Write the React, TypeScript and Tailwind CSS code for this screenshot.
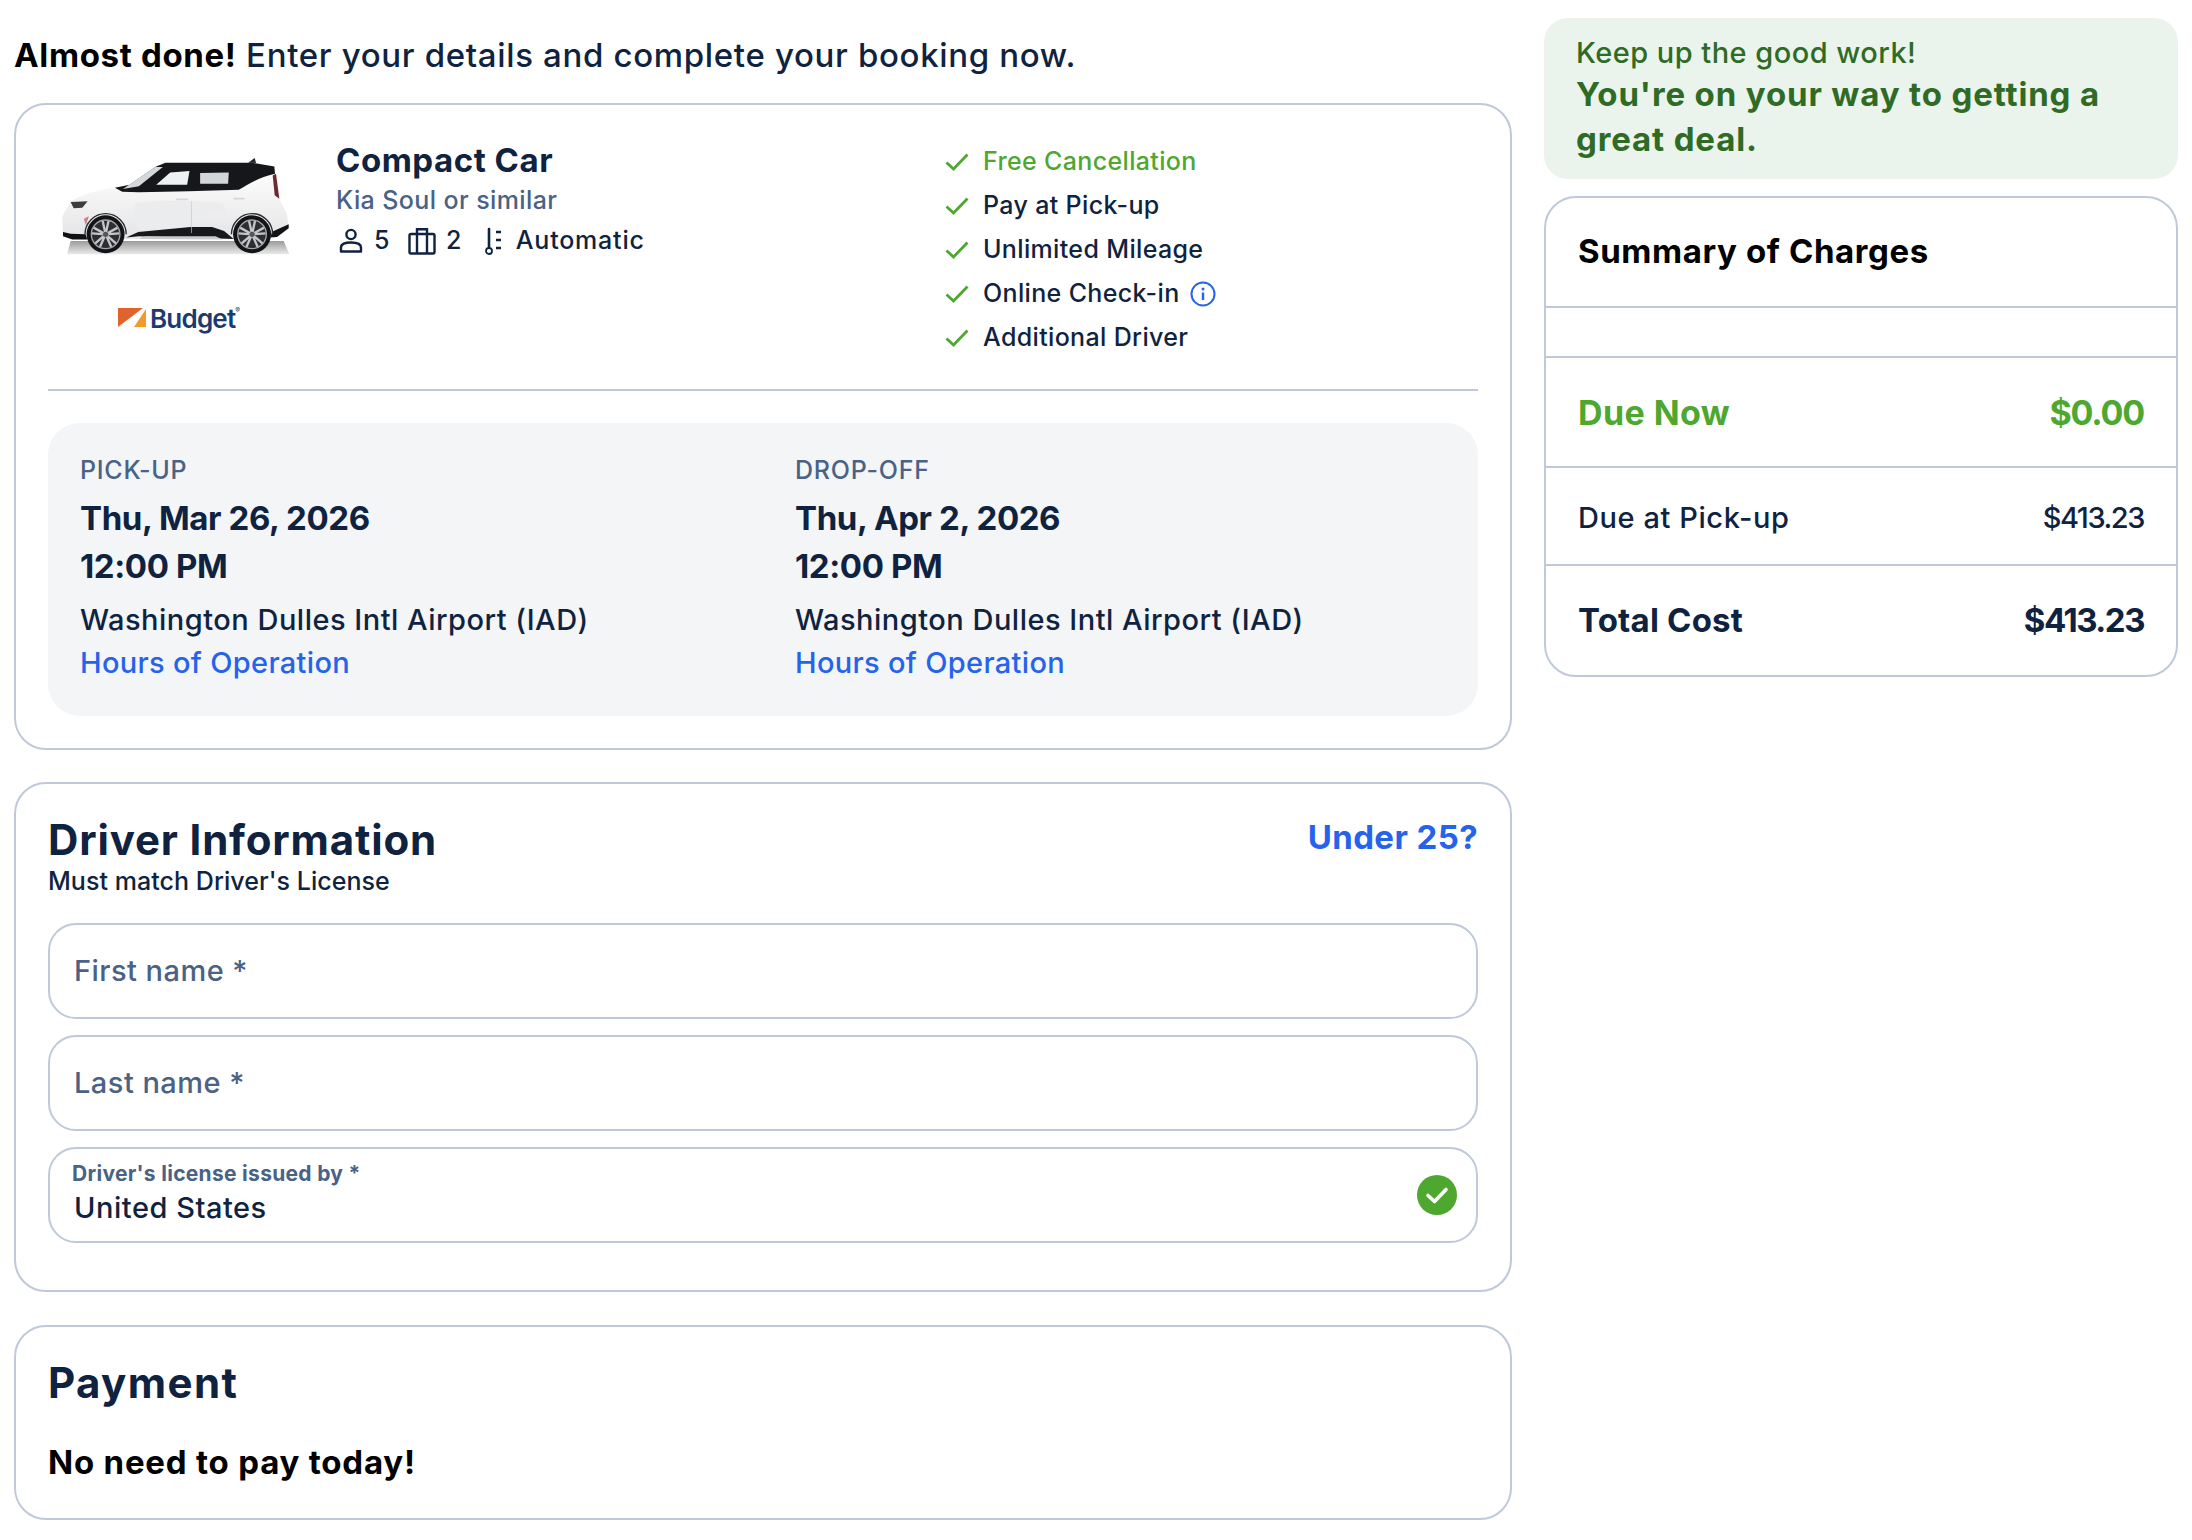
import React from "react";

function Car() {
  return (
    <svg viewBox="60 80 700 300" className="w-[233px] h-[100px] shrink-0" aria-hidden="true">
      <defs>
        <linearGradient id="shadow" x1="0" y1="0" x2="0" y2="1">
          <stop offset="0" stopColor="#6f6f6f" />
          <stop offset="1" stopColor="#e2e2e2" />
        </linearGradient>
        <linearGradient id="body" x1="0" y1="0" x2="0" y2="1">
          <stop offset="0" stopColor="#ffffff" />
          <stop offset="1" stopColor="#e4e4e6" />
        </linearGradient>
      </defs>
      <path d="M95 332 L735 332 L752 372 L84 372 Z" fill="url(#shadow)" opacity="0.7" />
      <path d="M72 312 L70 258 L95 213 C130 190 190 176 240 170 L640 110 L708 125 L716 195 L745 250 L750 292 L715 320 L130 328 Z" fill="url(#body)" />
      <path d="M290 218 C350 210 480 210 552 218 L566 250 C540 246 500 250 470 270 L460 290 L300 300 L282 262 Z" fill="#ebecee" />
      <path d="M228 172 L250 184 L300 186 L450 183 L600 178 C625 165 660 140 709 130 L707 108 L640 97 L380 97 L352 108 L272 163 Z" fill="#16171a" />
      <path d="M628 97 L648 83 L652 98 Z" fill="#26272a" />
      <path d="M252 176 L350 110 L372 110 L300 168 Z" fill="#d5d8da" />
      <path d="M352 163 L394 126 L452 122 L445 163 Z" fill="#eef1f2" />
      <path d="M484 128 L570 126 L568 160 L484 160 Z" fill="#d3d6d8" />
      <path d="M702 135 L712 130 L722 205 L708 195 Z" fill="#6b2a30" />
      <path d="M95 215 L146 213 L130 232 L104 234 Z" fill="#3b3d40" />
      <path d="M135 265 L150 258 L140 285 Z" fill="#b0141c" opacity="0.5" />
      <path d="M72 305 L95 310 L140 312 L145 328 L100 328 L72 318 Z" fill="#111214" />
      <path d="M262 322 L298 305 L455 290 L520 290 L556 302 L585 326 L300 318 Z" fill="#17181b" />
      <path d="M300 326 L320 318 L530 318 L552 328 Z" fill="#c9cacc" />
      <path d="M700 304 L750 282 L750 294 L715 320 L695 322 Z" fill="#111214" />
      <path d="M458 212 L458 308" stroke="#c8c9cb" strokeWidth="2" />
      <path d="M414 207 L445 207 M586 205 L616 205" stroke="#d5d6d8" strokeWidth="5" strokeLinecap="round" />
      {[200, 640].map((cx) => (
        <g key={cx}>
          <path d={`M${cx - 62} 312 A62 62 0 0 1 ${cx + 62} 312`} fill="none" stroke="#2a2b2e" strokeWidth="4" />
          <circle cx={cx} cy="312" r="57" fill="#131417" />
          <circle cx={cx} cy="312" r="44" fill="#2d2e31" />
          <g stroke="#c4c6c9" strokeWidth="7">
            <path d={`M${cx} 312 L${cx - 9} 271 M${cx} 312 L${cx + 9} 271`} />
            <path d={`M${cx} 312 L${cx + 36} 292 M${cx} 312 L${cx + 41} 309`} />
            <path d={`M${cx} 312 L${cx + 32} 340 M${cx} 312 L${cx + 17} 350`} />
            <path d={`M${cx} 312 L${cx - 32} 340 M${cx} 312 L${cx - 17} 350`} />
            <path d={`M${cx} 312 L${cx - 36} 292 M${cx} 312 L${cx - 41} 309`} />
          </g>
          <circle cx={cx} cy="312" r="43" fill="none" stroke="#a3a5a9" strokeWidth="4" />
          <circle cx={cx} cy="312" r="8" fill="#55575b" />
        </g>
      ))}
    </svg>
  );
}

function BudgetLogo() {
  return (
    <div className="flex items-start gap-[4px]">
      <svg viewBox="0 0 28 19" className="w-[28px] h-[19px] mt-[2px] shrink-0" aria-hidden="true">
        <path d="M0 0 H25 L0 19 Z" fill="#e0632c" />
        <path d="M28 1 V19 H16 Z" fill="#f39a2e" />
      </svg>
      <span className="text-[26px] leading-[26px] font-semibold tracking-[-0.03em] text-[#1d3a70]">Budget</span>
      <span className="text-[7px] leading-[10px] text-[#1d3a70] -ml-[4px]">®</span>
    </div>
  );
}

function Tick() {
  return (
    <svg viewBox="0 0 24 18" className="w-[24px] h-[18px] shrink-0" aria-hidden="true">
      <path d="M1.5 9.5 L8.5 16 L22.5 1.5" fill="none" stroke="#4ea72e" strokeWidth="2.8" />
    </svg>
  );
}

function Feature({ text, green, info }: { text: string; green?: boolean; info?: boolean }) {
  return (
    <div className="flex items-center h-[44px] pl-[1px]">
      <Tick />
      <span className={`ml-[14px] text-[25px] font-[450] tracking-[0.014em] ${green ? "text-[#4ea72e]" : "text-[#0f2340]"}`}>{text}</span>
      {info && (
        <svg viewBox="0 0 26 26" className="w-[26px] h-[26px] ml-[10px]" aria-hidden="true">
          <circle cx="13" cy="13" r="11.5" fill="none" stroke="#2563eb" strokeWidth="2" />
          <circle cx="13" cy="8" r="1.5" fill="#2563eb" />
          <path d="M13 11.5 V19" stroke="#2563eb" strokeWidth="2.4" />
        </svg>
      )}
    </div>
  );
}

function Place({ label, date }: { label: string; date: string }) {
  return (
    <div className="flex flex-col">
      <div className="h-[34px] flex items-center text-[25px] font-[450] tracking-[0.03em] text-[#4a6285]">{label}</div>
      <div className="mt-[7px] h-[48px] flex items-center text-[33px] font-[650] tracking-[-0.012em] text-[#0f2340]">{date}</div>
      <div className="h-[48px] flex items-center text-[33px] font-[650] tracking-[-0.012em] text-[#0f2340]">12:00 PM</div>
      <div className="mt-[7px] h-[44px] flex items-center text-[29px] font-[450] tracking-[0.017em] text-[#0f2340]">Washington Dulles Intl Airport (IAD)</div>
      <div className="h-[42px] flex items-center text-[29px] font-[450] tracking-[0.011em] text-[#2563eb]">Hours of Operation</div>
    </div>
  );
}

function Field({ label }: { label: string }) {
  return (
    <div className="h-[96px] rounded-[28px] border-2 border-[#bfc9d9] flex items-center pl-[24px] text-[29px] font-[450] tracking-[0.016em] text-[#4a6285]">
      {label}
    </div>
  );
}

export default function App() {
  return (
    <div className="w-[2192px] min-h-[1540px] bg-white flex gap-[32px] px-[14px] font-['Inter',sans-serif]">
      <div className="w-[1498px] shrink-0 flex flex-col">
        <h1 className="pt-[35px] h-[103px] text-[33px] leading-[40px] font-[450] tracking-[0.02em] text-[#0f2340]">
          <span className="font-bold text-black">Almost done!</span> Enter your details and complete your booking now.
        </h1>

        <section className="rounded-[32px] border-2 border-[#bfc9d9] px-[32px] pt-[32px] pb-[32px]">
          <div className="flex h-[254px] border-b-2 border-[#bfc9d9]">
            <div className="w-[288px] shrink-0 flex flex-col items-center pr-[50px]">
              <div className="mt-[20px] ml-[16px]"><Car /></div>
              <div className="mt-[49px] ml-[24px]"><BudgetLogo /></div>
            </div>
            <div className="w-[608px] shrink-0 flex flex-col">
              <div className="h-[44px] mt-[2px] flex items-center text-[33px] font-[650] tracking-[0.016em] text-[#0f2340]">Compact Car</div>
              <div className="h-[36px] flex items-center text-[25px] font-[450] tracking-[0.016em] text-[#4a6285]">Kia Soul or similar</div>
              <div className="h-[40px] mt-[2px] flex items-center text-[25px] font-[450] text-[#0f2340] tracking-[0.018em]">
                <svg viewBox="0 0 24 26" className="w-[24px] h-[26px] ml-[3px]" aria-hidden="true">
                  <circle cx="12" cy="6.5" r="4.6" fill="none" stroke="#0f2340" strokeWidth="2.4" />
                  <path d="M2 23.5 V19.5 C2 16 6 14.5 12 14.5 C18 14.5 22 16 22 19.5 V23.5 Z" fill="none" stroke="#0f2340" strokeWidth="2.4" strokeLinejoin="round" />
                </svg>
                <span className="ml-[11px]">5</span>
                <svg viewBox="0 0 28 28" className="w-[28px] h-[28px] ml-[18px]" aria-hidden="true">
                  <rect x="1.5" y="7" width="25" height="19.5" rx="1.5" fill="none" stroke="#0f2340" strokeWidth="2.4" />
                  <path d="M9 26 V2.2 H19 V26" fill="none" stroke="#0f2340" strokeWidth="2.4" />
                </svg>
                <span className="ml-[10px]">2</span>
                <svg viewBox="0 0 20 28" className="w-[20px] h-[28px] ml-[22px]" aria-hidden="true">
                  <path d="M5 2 V20" stroke="#0f2340" strokeWidth="2.6" strokeLinecap="round" />
                  <circle cx="5" cy="24" r="3" fill="none" stroke="#0f2340" strokeWidth="1.8" />
                  <path d="M12 5 H17 M12 13 H17 M12 21 H17" stroke="#0f2340" strokeWidth="2.4" />
                </svg>
                <span className="ml-[12px] tracking-[0.032em]">Automatic</span>
              </div>
            </div>
            <div className="flex flex-col pt-[3px]">
              <Feature text="Free Cancellation" green />
              <Feature text="Pay at Pick-up" />
              <Feature text="Unlimited Mileage" />
              <Feature text="Online Check-in" info />
              <Feature text="Additional Driver" />
            </div>
          </div>
          <div className="mt-[32px] h-[293px] rounded-[32px] bg-[#f3f5f7] pl-[32px] pt-[31px] grid grid-cols-[715px_1fr]">
            <Place label="PICK-UP" date="Thu, Mar 26, 2026" />
            <Place label="DROP-OFF" date="Thu, Apr 2, 2026" />
          </div>
        </section>

        <section className="mt-[32px] rounded-[32px] border-2 border-[#bfc9d9] px-[32px] pt-[28px] h-[510px]">
          <div className="flex justify-between items-start h-[111px]">
            <div>
              <h2 className="h-[54px] flex items-center text-[42px] font-[750] tracking-[0.02em] text-[#0f2340]">Driver Information</h2>
              <div className="h-[32px] flex items-center text-[25px] font-[450] tracking-[0.002em] text-[#0f2340]">Must match Driver's License</div>
            </div>
            <div className="mt-[3px] h-[46px] flex items-center text-[33px] font-[750] tracking-[0.012em] text-[#2563eb]">Under 25?</div>
          </div>
          <div className="flex flex-col gap-[16px]">
            <Field label="First name *" />
            <Field label="Last name *" />
            <div className="h-[96px] rounded-[28px] border-2 border-[#bfc9d9] pl-[22px] pr-[19px] flex items-center justify-between">
              <div className="flex flex-col -mt-[3px]">
                <span className="h-[28px] flex items-center text-[21px] font-[650] tracking-[0.014em] text-[#4a6285]">Driver's license issued by *</span>
                <span className="h-[40px] pl-[2px] flex items-center text-[29px] font-[450] tracking-[0.018em] text-[#0f2340]">United States</span>
              </div>
              <svg viewBox="0 0 40 40" className="w-[40px] h-[40px] shrink-0" aria-hidden="true">
                <circle cx="20" cy="20" r="20" fill="#4ea72e" />
                <path d="M11 20.5 L17.5 26.5 L29 14.5" fill="none" stroke="#fff" strokeWidth="3.6" strokeLinecap="round" strokeLinejoin="round" />
              </svg>
            </div>
          </div>
        </section>

        <section className="mt-[33px] rounded-[32px] border-2 border-[#bfc9d9] px-[32px] h-[195px]">
          <h2 className="mt-[30px] h-[50px] flex items-center text-[42px] font-[750] tracking-[0.033em] text-[#0f2340]">Payment</h2>
          <div className="mt-[34px] h-[44px] flex items-center text-[33px] font-[750] tracking-[0.024em] text-black">No need to pay today!</div>
        </section>
      </div>

      <div className="w-[634px] shrink-0 flex flex-col pt-[18px]">
        <div className="h-[161px] rounded-[24px] bg-[#eaf4ec] pl-[32px] pr-[24px] pt-[15px] text-[#2f6b25]">
          <div className="h-[39px] flex items-center text-[29px] font-[450] tracking-[0.016em]">Keep up the good work!</div>
          <div className="text-[33px] leading-[45px] font-[750] tracking-[0.026em]">You're on your way to getting a great deal.</div>
        </div>
        <div className="mt-[17px] rounded-[32px] border-2 border-[#bfc9d9] flex flex-col">
          <div className="h-[110px] px-[32px] pt-[31px] border-b-2 border-[#bfc9d9] text-[33px] leading-[44px] font-[750] tracking-[0.018em] text-black">Summary of Charges</div>
          <div className="h-[50px] border-b-2 border-[#bfc9d9]" />
          <div className="h-[110px] px-[32px] border-b-2 border-[#bfc9d9] flex items-center justify-between text-[34px] font-[750] text-[#4ea72e] tracking-[0.012em]">
            <span>Due Now</span><span className="tracking-[-0.035em]">$0.00</span>
          </div>
          <div className="h-[98px] pt-[4px] px-[32px] border-b-2 border-[#bfc9d9] flex items-center justify-between text-[29px] font-[450] text-[#0f2340] tracking-[0.02em]">
            <span>Due at Pick-up</span><span className="tracking-[-0.05em]">$413.23</span>
          </div>
          <div className="h-[109px] px-[32px] flex items-center justify-between text-[33px] font-[750] text-[#0f2340] tracking-[0.006em]">
            <span>Total Cost</span><span className="tracking-[-0.045em]">$413.23</span>
          </div>
        </div>
      </div>
    </div>
  );
}
